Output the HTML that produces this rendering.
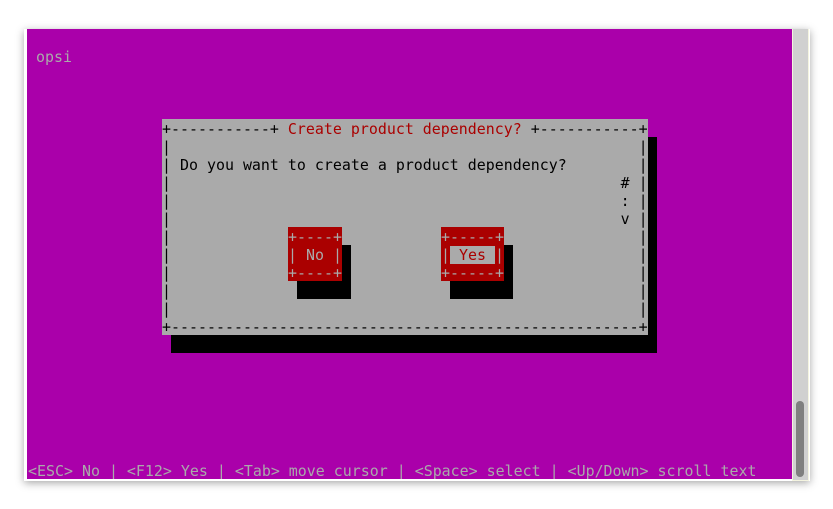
<!DOCTYPE html>
<html><head><meta charset="utf-8"><style>
html,body{margin:0;padding:0;background:#fff;width:833px;height:509px;overflow:hidden;position:relative}
.win{position:absolute;left:24px;top:29px;width:786px;height:452px;box-shadow:0 2px 8px rgba(0,0,0,.35)}
.term{position:absolute;left:27px;top:29px;width:765px;height:450px;background:#aa00aa;overflow:hidden;font-family:"DejaVu Sans Mono","Liberation Mono",monospace;font-size:14.94px;line-height:18px}
.sb{position:absolute;left:792px;top:29px;width:15px;height:451px;background:#d0d0d0;border-left:1px solid #f4f4e0;border-right:1px solid #f4f4e0;border-bottom:1px solid #f4f4e0}
.thumb{position:absolute;left:796px;top:401px;width:8px;height:76px;background:#7f7f7f;border-radius:4px}
.r{position:absolute;white-space:pre;height:18px;left:0;padding-top:1px}
.g{color:#aaaaaa}
.box{position:absolute;left:135px;top:90px;width:486px;height:216px;background:#aaaaaa;color:#000}
.sh{position:absolute;background:#000}
.btn{position:absolute;background:#aa0000;color:#aaaaaa;white-space:pre;padding-top:1px;box-sizing:border-box}
.hl{background:#aaaaaa;color:#aa0000}
</style></head><body>
<div class="win"></div>
<div class="term">
<div class="r g" style="left:9px;top:18px">opsi</div>
<div class="sh" style="left:144px;top:108px;width:486px;height:216px"></div>
<div class="box">
<div class="r" style="top:0">+-----------+ <span style="color:#aa0000">Create product dependency?</span> +-----------+</div>
<div class="r" style="top:18px">|                                                    |</div>
<div class="r" style="top:36px">| Do you want to create a product dependency?        |</div>
<div class="r" style="top:54px">|                                                  # |</div>
<div class="r" style="top:72px">|                                                  : |</div>
<div class="r" style="top:90px">|                                                  v |</div>
<div class="r" style="top:108px">|                                                    |</div>
<div class="r" style="top:126px">|                                                    |</div>
<div class="r" style="top:144px">|                                                    |</div>
<div class="r" style="top:162px">|                                                    |</div>
<div class="r" style="top:180px">|                                                    |</div>
<div class="r" style="top:198px">+----------------------------------------------------+</div>
<div class="sh" style="left:135px;top:126px;width:54px;height:54px"></div>
<div class="btn" style="left:126px;top:108px;width:54px;height:54px">+----+
| No |
+----+</div>
<div class="sh" style="left:288px;top:126px;width:63px;height:54px"></div>
<div class="btn" style="left:279px;top:108px;width:63px;height:54px">+-----+
|<span class="hl"> Yes </span>|
+-----+</div>
</div>
<div class="r g" style="left:1px;top:432px">&lt;ESC&gt; No | &lt;F12&gt; Yes | &lt;Tab&gt; move cursor | &lt;Space&gt; select | &lt;Up/Down&gt; scroll text</div>
</div>
<div class="sb"></div>
<div class="thumb"></div>
</body></html>
